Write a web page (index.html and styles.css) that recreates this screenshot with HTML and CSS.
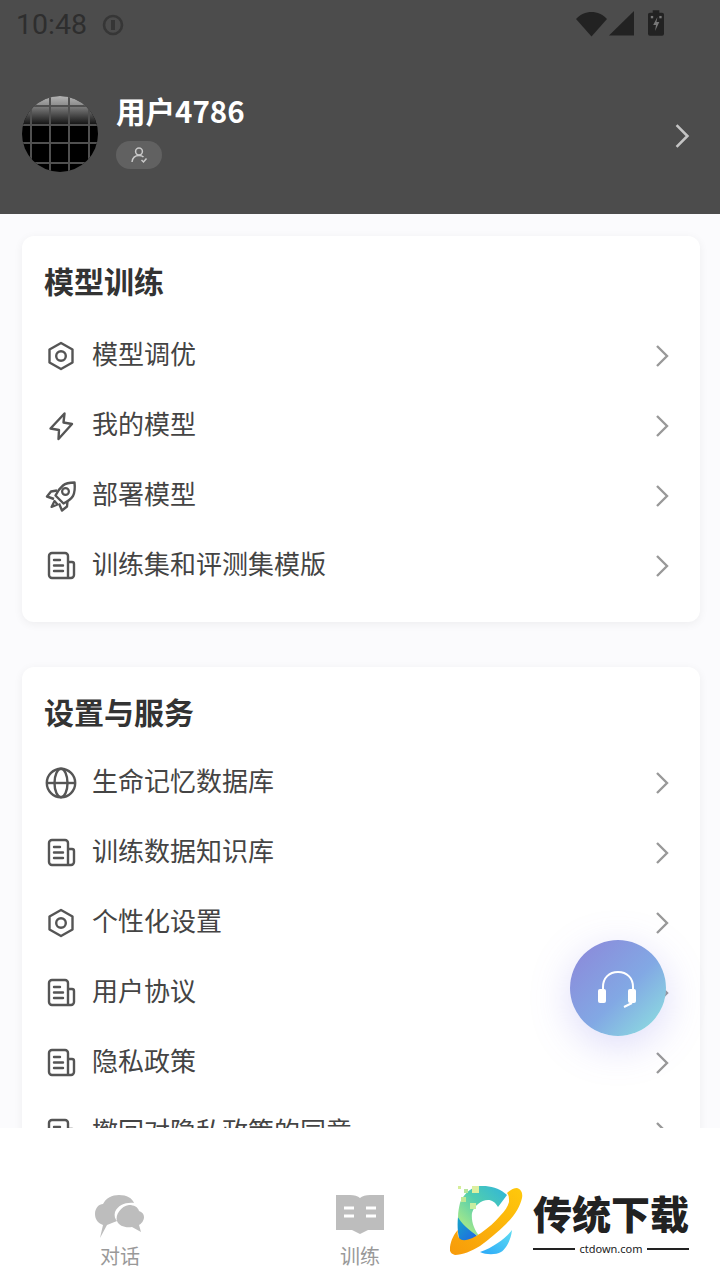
FILE: index.html
```html
<!DOCTYPE html>
<html lang="en">
<head>
    <meta charset="UTF-8">
    <meta name="viewport" content="width=device-width, initial-scale=1.0">
    <title>我的</title>
    <link rel="stylesheet" href="styles.css">
</head>
<body>

    <svg class="icon-defs" width="0" height="0">
        <defs>
            <symbol id="i-nut" viewBox="0 0 32 32">
                <path d="M16 3 L27.5 9.5 V22.5 L16 29 L4.5 22.5 V9.5 Z" fill="none" stroke="currentColor" stroke-width="2.4" stroke-linejoin="round"/>
                <circle cx="16" cy="16" r="4.8" fill="none" stroke="currentColor" stroke-width="2.4"/>
            </symbol>
            <symbol id="i-bolt" viewBox="0 0 32 32">
                <path d="M19.5 3.5 L18.5 12.5 L27 14 L13.5 29 L14 20 L5.5 18.5 Z" fill="none" stroke="currentColor" stroke-width="2.4" stroke-linejoin="round"/>
            </symbol>
            <symbol id="i-rocket" viewBox="0 0 32 32">
                <path d="M29.5 2.5 C25 2.5 21 3 18 5.5 C15 8 12.5 11.5 10.5 15.5 L18.5 23.5 C22.5 21.5 26 19 28 16 C30 12 30 7 29.5 2.5 Z" fill="none" stroke="currentColor" stroke-width="2.4" stroke-linejoin="round"/>
                <circle cx="20.5" cy="11.5" r="3.4" fill="none" stroke="currentColor" stroke-width="2.2"/>
                <path d="M12 10.5 L6 11.5 L2 16.5 L9 19 M22.5 21 L22 26.5 L17 30.5 L14 23.5" fill="none" stroke="currentColor" stroke-width="2.4" stroke-linejoin="round"/>
                <path d="M9.5 21 L6.5 27 L12.5 24.5 Z" fill="none" stroke="currentColor" stroke-width="2.2" stroke-linejoin="round"/>
            </symbol>
            <symbol id="i-doc" viewBox="0 0 32 32">
                <path d="M23 28 H7 A3 3 0 0 1 4 25 V6 A3 3 0 0 1 7 3 H20 A3 3 0 0 1 23 6 V28 H26 A3 3 0 0 0 29 25 V14 A2 2 0 0 0 27 12 H23" fill="none" stroke="currentColor" stroke-width="2.4" stroke-linejoin="round"/>
                <path d="M9 10 H15 M9 15.5 H18 M9 21 H18" fill="none" stroke="currentColor" stroke-width="2.4" stroke-linecap="round"/>
            </symbol>
            <symbol id="i-globe" viewBox="0 0 32 32">
                <circle cx="16" cy="16" r="14.2" fill="none" stroke="currentColor" stroke-width="2.4"/>
                <ellipse cx="16" cy="16" rx="6.5" ry="14.2" fill="none" stroke="currentColor" stroke-width="2.4"/>
                <path d="M2 16 H30" fill="none" stroke="currentColor" stroke-width="2.4"/>
            </symbol>
            <symbol id="i-chevron" viewBox="0 0 14 24">
                <path d="M2 2 L12 12 L2 22" fill="none" stroke="currentColor" stroke-width="2.4"/>
            </symbol>
        </defs>
    </svg>

    <div class="app">
        <header class="profile">
            <div class="status-bar">
                <span class="time">10:48</span>
                <svg class="status-alert" width="22" height="22" viewBox="0 0 22 22">
                    <circle cx="11" cy="11" r="9" fill="none" stroke="#363636" stroke-width="2.6"/>
                    <rect x="9" y="6" width="4" height="10" fill="#363636"/>
                </svg>
                <div class="status-icons">
                    <svg width="31" height="26" viewBox="0 0 31 26">
                        <path d="M0 8 C8 -1.5 23 -1.5 31 8 L15.5 25.5 Z" fill="#222"/>
                    </svg>
                    <svg width="25" height="25" viewBox="0 0 25 25">
                        <path d="M25 0 V24.5 H0 Z" fill="#222"/>
                    </svg>
                    <svg class="status-battery" width="16" height="26" viewBox="0 0 17 27">
                        <path d="M5 0 H12 V2.5 H15 A2 2 0 0 1 17 4.5 V25 A2 2 0 0 1 15 27 H2 A2 2 0 0 1 0 25 V4.5 A2 2 0 0 1 2 2.5 H5 Z" fill="#222"/>
                        <path d="M10 7 L5.5 15.5 H8.5 L7.5 22 L12 12.5 H9 Z" fill="#777"/>
                        <rect x="3" y="6" width="2.5" height="2.5" fill="#777"/>
                        <rect x="12" y="6" width="2.5" height="2.5" fill="#777"/>
                    </svg>
                </div>
            </div>
            <div class="user-row">
                <svg class="avatar" width="76" height="76" viewBox="0 0 76 76">
                    <defs>
                        <linearGradient id="avatar-top" x1="0" y1="0" x2="0" y2="1">
                            <stop offset="0" stop-color="#b4b4b4"/>
                            <stop offset="1" stop-color="#8a8a8a"/>
                        </linearGradient>
                        <linearGradient id="avatar-shine" x1="0" y1="0" x2="0" y2="1">
                            <stop offset="0" stop-color="#808080"/>
                            <stop offset="1" stop-color="#101010"/>
                        </linearGradient>
                        <clipPath id="avatar-clip"><circle cx="38" cy="38" r="38"/></clipPath>
                    </defs>
                    <g clip-path="url(#avatar-clip)">
                        <rect width="76" height="76" fill="#000"/>
                        <rect x="0" y="0" width="76" height="10" fill="url(#avatar-top)"/>
                        <rect x="0" y="10" width="76" height="19" fill="url(#avatar-shine)"/>
                        <path d="M9 0 V76 M28 0 V76 M47 0 V76 M67 0 V76 M0 10 H76 M0 29 H76 M0 47 H76 M0 67 H76" stroke="#505050" stroke-width="2"/>
                    </g>
                </svg>
                <div class="user-info">
                    <div class="user-name">用户4786</div>
                    <div class="user-badge">
                        <svg width="18" height="18" viewBox="0 0 18 18">
                            <circle cx="9" cy="5.5" r="3.4" fill="none" stroke="#c9c9c9" stroke-width="1.5"/>
                            <path d="M2 16 C2.5 12 5 9.5 9 9.5 C11 9.5 12.5 10 13.5 11 M11.5 14 L13.5 16 L16.5 12.5" fill="none" stroke="#c9c9c9" stroke-width="1.5"/>
                        </svg>
                    </div>
                </div>
                <svg class="user-chevron" width="16" height="26"><use href="#i-chevron"/></svg>
            </div>
        </header>

        <main class="content">
            <section class="card card-training">
                <h2 class="card-title">模型训练</h2>
                <div class="row"><svg class="row-icon"><use href="#i-nut"/></svg><span class="row-text">模型调优</span><svg class="chevron"><use href="#i-chevron"/></svg></div>
                <div class="row"><svg class="row-icon"><use href="#i-bolt"/></svg><span class="row-text">我的模型</span><svg class="chevron"><use href="#i-chevron"/></svg></div>
                <div class="row"><svg class="row-icon"><use href="#i-rocket"/></svg><span class="row-text">部署模型</span><svg class="chevron"><use href="#i-chevron"/></svg></div>
                <div class="row"><svg class="row-icon"><use href="#i-doc"/></svg><span class="row-text">训练集和评测集模版</span><svg class="chevron"><use href="#i-chevron"/></svg></div>
            </section>

            <section class="card card-services">
                <h2 class="card-title">设置与服务</h2>
                <div class="row"><svg class="row-icon"><use href="#i-globe"/></svg><span class="row-text">生命记忆数据库</span><svg class="chevron"><use href="#i-chevron"/></svg></div>
                <div class="row"><svg class="row-icon"><use href="#i-doc"/></svg><span class="row-text">训练数据知识库</span><svg class="chevron"><use href="#i-chevron"/></svg></div>
                <div class="row"><svg class="row-icon"><use href="#i-nut"/></svg><span class="row-text">个性化设置</span><svg class="chevron"><use href="#i-chevron"/></svg></div>
                <div class="row"><svg class="row-icon"><use href="#i-doc"/></svg><span class="row-text">用户协议</span><svg class="chevron"><use href="#i-chevron"/></svg></div>
                <div class="row"><svg class="row-icon"><use href="#i-doc"/></svg><span class="row-text">隐私政策</span><svg class="chevron"><use href="#i-chevron"/></svg></div>
                <div class="row"><svg class="row-icon"><use href="#i-doc"/></svg><span class="row-text">撤回对隐私政策的同意</span><svg class="chevron"><use href="#i-chevron"/></svg></div>
            </section>
        </main>

        <nav class="tabbar">
            <div class="tab">
                <svg width="50" height="44" viewBox="0 0 50 44">
                    <path d="M24 0 C32 0 37 3 39 8 C31 7 23 10 20 17 C19 21 20 24 22 26 L12 30 L5 43 L8 30 C2 28 0 23 0 19 C0 13 4 9 8 9 C11 3 17 0 24 0 Z" fill="#bdbdbd"/>
                    <path d="M34 10 C39 10 43 12 44 16 C47 17 49 19 49 22 C49 26 46 29 44 30 L46 37 L37 32 C30 33 24 31 22 26 C20 20 26 11 34 10 Z" fill="#bdbdbd"/>
                </svg>
                <span class="tab-label">对话</span>
            </div>
            <div class="tab">
                <svg width="48" height="44" viewBox="0 0 48 44">
                    <path d="M0 0 H14 C18 0 22 1 24 3 C26 1 30 0 34 0 H48 V35 H32 L24 39 L16 35 H0 Z" fill="#bdbdbd"/>
                    <path d="M8 13 H18 M30 13 H40 M8 21 H18 M30 21 H40" stroke="#fff" stroke-width="3"/>
                </svg>
                <span class="tab-label">训练</span>
            </div>
            <div class="tab"></div>
        </nav>

        <div class="service-btn">
            <svg width="42" height="40" viewBox="0 0 42 40">
                <path d="M6 22 V17 C6 8 12 2 21 2 C30 2 36 8 36 17 V22" fill="none" stroke="#fff" stroke-width="2"/>
                <rect x="1" y="19" width="8" height="14" rx="2" fill="#fff"/>
                <rect x="31" y="19" width="8" height="14" rx="2" fill="#fff"/>
                <path d="M35 33 L27 37" stroke="#fff" stroke-width="2"/>
            </svg>
        </div>

        <div class="watermark">
            <svg class="watermark-logo" width="73" height="70" viewBox="0 0 73 70">
                <defs>
                    <linearGradient id="wm-ring" x1="0" y1="1" x2="1" y2="0">
                        <stop offset="0" stop-color="#f79a0a"/>
                        <stop offset="1" stop-color="#ffc90c"/>
                    </linearGradient>
                    <linearGradient id="wm-c" x1="1" y1="0" x2="0" y2="1">
                        <stop offset="0" stop-color="#2fb4dc"/>
                        <stop offset="0.45" stop-color="#4fcdb0"/>
                        <stop offset="0.8" stop-color="#9ce58e"/>
                    </linearGradient>
                    <linearGradient id="wm-low" x1="0" y1="0" x2="1" y2="1">
                        <stop offset="0" stop-color="#18a6c8"/>
                        <stop offset="1" stop-color="#1f5ce8"/>
                    </linearGradient>
                    <linearGradient id="wm-cres" x1="1" y1="0" x2="0" y2="1">
                        <stop offset="0" stop-color="#5fdcf2"/>
                        <stop offset="1" stop-color="#2aa8f8"/>
                    </linearGradient>
                </defs>
                <path d="M8 31 C7 40 8 50 10 57 L30 53 C24 47 20 42 16 36 Z" fill="url(#wm-low)"/>
                <path d="M10 17 C13 9 20 2 28 0 C38 -1 50 2 57 9 L48 21 C45 16 42 14 38 14 C31 14 24 20 22 27 C21 35 24 44 30 51 C20 46 10 36 8 31 C8 26 9 21 10 17 Z" fill="url(#wm-c)"/>
                <path d="M57 7 C60 4 64 2 67 2 C71 3 73 7 72 12 C70 21 65 29 56 38 C48 46 38 54 30 60 C22 65 12 69 5 69 C1 68 -1 65 0 61 C1 54 4 48 8 44 C7 49 8 53 12 54 C18 55 25 51 31 47 C38 42 45 36 50 30 C55 25 58 20 59 16 C59 12 59 9 57 7 Z" fill="url(#wm-ring)"/>
                <path d="M62 44 C56 52 44 61 30 66 C36 69 46 69 51 66 C56 63 61 54 62 44 Z" fill="url(#wm-cres)"/>
                <rect x="8" y="0" width="3" height="3" fill="#d6ee9a"/>
                <rect x="14" y="3" width="4" height="4" fill="#b5e59a"/>
                <rect x="22" y="0" width="7" height="7" fill="#dcef9f"/>
                <rect x="11" y="11" width="5" height="5" fill="#c0e896"/>
                <rect x="20" y="17" width="6" height="6" fill="#c8eda0"/>
            </svg>
            <div class="watermark-brand">
                <div class="watermark-name">传统下载</div>
                <div class="watermark-url">ctdown.com</div>
            </div>
        </div>
    </div>

</body>
</html>
```

FILE: styles.css
```css
* {
    margin: 0;
    padding: 0;
    box-sizing: border-box;
}

body {
    font-family: "Noto Sans CJK SC", "Noto Sans", sans-serif;
    background-color: #fff;
    width: 720px;
    height: 1280px;
    overflow: hidden;
}

.icon-defs {
    display: block;
}

.app {
    position: relative;
    width: 720px;
    height: 1280px;
    display: flex;
    flex-direction: column;
    overflow: hidden;
}

.profile {
    height: 214px;
    flex: none;
    background-color: #4c4c4c;
}

.status-bar {
    height: 50px;
    display: flex;
    align-items: center;
    padding-left: 16px;
    color: #2e2e2e;
}

.time {
    font-family: Roboto, sans-serif;
    font-size: 28.5px;
    line-height: 50px;
    width: 86px;
}

.status-icons {
    margin-left: auto;
    width: 144px;
    display: flex;
    align-items: flex-start;
    padding-top: 11px;
    height: 50px;
}

.status-icons svg {
    margin-right: 2px;
}

.status-icons .status-battery {
    margin-left: 12px;
    margin-top: -1px;
}

.user-row {
    display: flex;
    align-items: flex-start;
    padding: 46px 30px 0 22px;
}

.avatar {
    flex: none;
}

.user-info {
    margin-left: 18px;
    flex: 1;
}

.user-name {
    color: #fff;
    font-size: 29.5px;
    font-weight: 700;
    line-height: 40px;
    margin-top: -6px;
}

.user-badge {
    width: 46px;
    height: 28px;
    margin-top: 11px;
    border-radius: 14px;
    background-color: #616161;
    display: flex;
    align-items: center;
    justify-content: center;
}

.user-chevron {
    color: #c4c4c4;
    margin-top: 27px;
    margin-left: -1px;
}

.content {
    flex: 1;
    min-height: 0;
    overflow: hidden;
    background-color: #fbfbfd;
    padding: 22px 20px 0 22px;
}

.card {
    background-color: #fff;
    border-radius: 12px;
    box-shadow: 0 2px 10px rgba(0, 0, 0, 0.06);
    padding: 0 22px;
}

.card-training {
    height: 386px;
    margin-bottom: 45px;
}

.card-title {
    color: #333;
    font-size: 30px;
    font-weight: 700;
    line-height: 36px;
    padding-top: 26px;
    box-sizing: content-box;
}

.card-training .row:first-of-type {
    margin-top: 22px;
}

.card-services .row:first-of-type {
    margin-top: 18px;
}

.row {
    height: 70px;
    display: flex;
    align-items: center;
}

.row-icon {
    width: 32px;
    height: 32px;
    flex: none;
    color: #555;
    margin-left: 1px;
    margin-top: 2px;
}

.row-text {
    flex: 1;
    margin-left: 15px;
    color: #444;
    font-size: 26px;
    line-height: 36px;
    padding-bottom: 4px;
}

.chevron {
    width: 14px;
    height: 24px;
    flex: none;
    color: #999;
    margin-right: 9px;
    margin-top: 2px;
}

.tabbar {
    height: 152px;
    flex: none;
    background-color: #fff;
    display: grid;
    grid-template-columns: repeat(3, 240px);
    padding-top: 67px;
}

.tab {
    display: flex;
    flex-direction: column;
    align-items: center;
}

.tab-label {
    color: #999;
    font-size: 20px;
    line-height: 28px;
    margin-top: 3px;
}

.service-btn {
    position: absolute;
    left: 570px;
    top: 940px;
    width: 96px;
    height: 96px;
    border-radius: 50%;
    background: linear-gradient(135deg, #8a8fdc 15%, #82a8e4 55%, #8cdae0 92%);
    box-shadow: 0 10px 40px rgba(125, 115, 230, 0.26);
    display: flex;
    align-items: center;
    justify-content: center;
    padding-top: 4px;
}

.watermark {
    position: absolute;
    left: 450px;
    top: 1186px;
    display: flex;
    align-items: flex-start;
    background-color: #fff;
}

.watermark-brand {
    margin-left: 10px;
    width: 156px;
}

.watermark-name {
    color: #222;
    font-size: 39px;
    font-weight: 900;
    line-height: 52px;
    white-space: nowrap;
}

.watermark-url {
    display: flex;
    align-items: center;
    gap: 4px;
    color: #222;
    font-family: "Noto Sans", sans-serif;
    font-size: 11px;
    line-height: 16px;
    margin-top: 3px;
}

.watermark-url::before,
.watermark-url::after {
    content: "";
    flex: 1;
    height: 2px;
    background-color: #222;
}
```
